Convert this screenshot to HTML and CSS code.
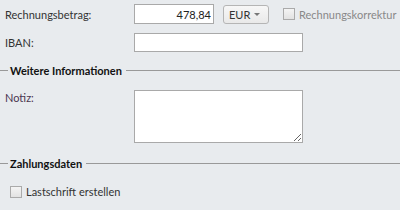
FILE: index.html
```html
<!DOCTYPE html>
<html lang="de">
<head>
  <meta charset="UTF-8">
  <title>Rechnung</title>
  <link rel="stylesheet" href="styles.css">
</head>
<body>
  <div class="row first">
    <label class="lbl">Rechnungsbetrag:</label>
    <input class="field amount" type="text" value="478,84">
    <div class="select">EUR <span class="caret"></span></div>
    <label class="check muted"><span class="box"></span>Rechnungskorrektur</label>
  </div>
  <div class="row">
    <label class="lbl">IBAN:</label>
    <input class="field wide" type="text">
  </div>

  <div class="section"><span>Weitere Informationen</span></div>
  <div class="row top">
    <label class="lbl notiz">Notiz:</label>
    <textarea class="field note"></textarea>
  </div>

  <div class="section"><span>Zahlungsdaten</span></div>
  <div class="row indent">
    <label class="check"><span class="box"></span>Lastschrift erstellen</label>
  </div>
</body>
</html>
```

FILE: styles.css
```css
body {
  margin: 0;
  background-color: #e8ebee;
  font-family: Lato, sans-serif;
  font-size: 11px;
  line-height: 15px;
  color: #333;
  width: 400px;
  height: 210px;
  overflow: hidden;
}
.row {
  display: flex;
  align-items: center;
  padding-left: 5px;
}
.row.first {
  padding-top: 4px;
}
.row + .row {
  margin-top: 9px;
}
.row.top {
  align-items: flex-start;
  margin-top: 12px;
}
.lbl {
  width: 129px;
  flex: none;
}
.notiz {
  color: #4a3550;
}
.field {
  box-sizing: border-box;
  border: 1px solid #a9a9a9;
  background: #fff;
  font-family: Lato, sans-serif;
  font-size: 11px;
  color: #222;
  margin: 0;
  padding: 0 2px;
  outline: none;
}
.amount {
  width: 80px;
  height: 20px;
  text-align: right;
}
.wide {
  width: 169px;
  height: 19px;
}
.note {
  display: block;
  width: 169px;
  height: 53px;
  resize: both;
}
.select {
  box-sizing: border-box;
  flex: none;
  width: 46px;
  height: 19px;
  margin-left: 9px;
  border: 1px solid #b5b5b5;
  border-radius: 3px;
  background: linear-gradient(#f7f7f7, #e9e9e9);
  padding: 0 8px 0 5px;
  display: flex;
  align-items: center;
  justify-content: space-between;
}
.caret {
  width: 0;
  height: 0;
  border-left: 3px solid transparent;
  border-right: 3px solid transparent;
  border-top: 3px solid #777;
}
.check {
  display: flex;
  align-items: center;
  white-space: nowrap;
}
.check.muted {
  color: #888;
  margin-left: 14px;
}
.box {
  box-sizing: border-box;
  flex: none;
  width: 12px;
  height: 12px;
  border: 1px solid #aaa;
  background: linear-gradient(#f4f4f4, #e2e2e2);
  margin-right: 4px;
}
.section {
  display: flex;
  align-items: center;
  height: 16px;
  margin-top: 10px;
  font-weight: bold;
  color: #111;
}
.section + .row {
  margin-top: 12px;
}
.row + .section {
  margin-top: 10px;
}
.row.top + .section {
  margin-top: 12px;
}
.section::before {
  content: "";
  width: 8px;
  border-top: 1px solid #999;
  margin-right: 2px;
}
.section::after {
  content: "";
  flex: 1;
  border-top: 1px solid #999;
  margin-left: 4px;
}
.row.indent {
  padding-left: 10px;
  margin-top: 13px;
}
```
